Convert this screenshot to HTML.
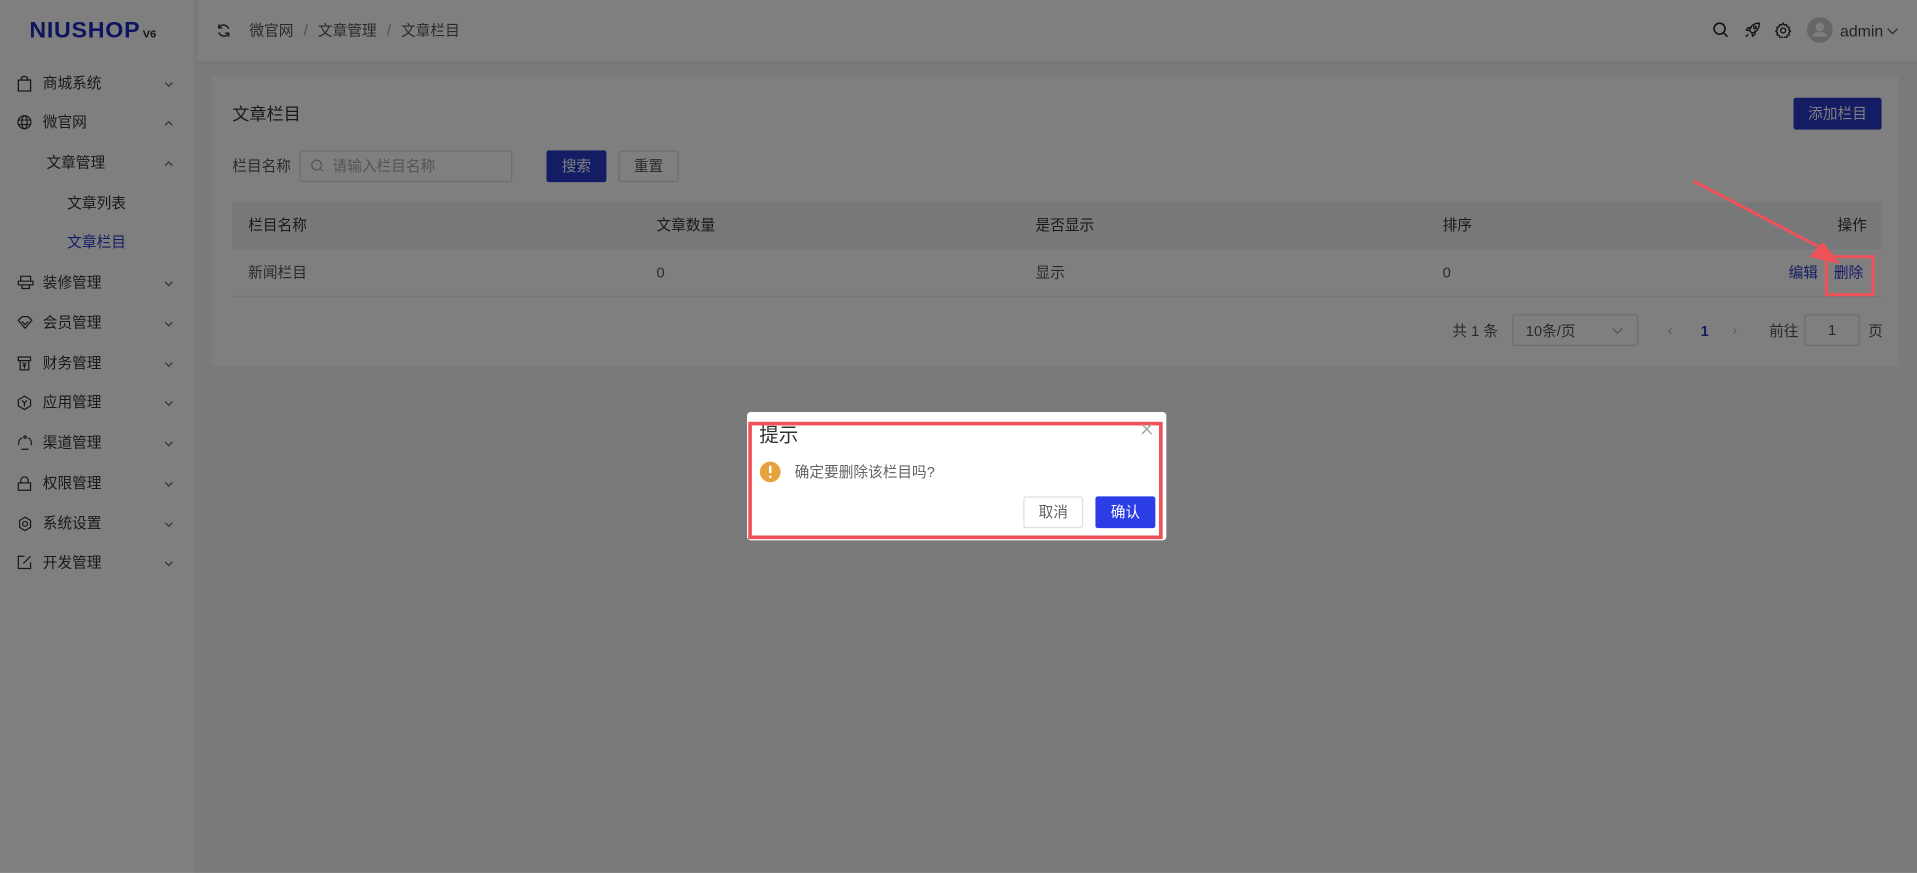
<!DOCTYPE html>
<html><head><meta charset="utf-8"><style>
*{margin:0;padding:0;box-sizing:border-box}
html,body{width:1917px;height:873px;overflow:hidden;background:#f4f5f7}
body{font-family:"Liberation Sans","Noto Sans CJK SC",sans-serif;color:#333;font-size:12px}
#w{position:absolute;left:0;top:0;width:1568px;height:714px;transform:scale(1.22258);transform-origin:0 0;background:#f4f5f7}
.a{position:absolute;white-space:nowrap;line-height:1}
.side{position:absolute;left:0;top:0;width:160px;height:714px;background:#fff;border-right:1px solid #eee}
.mi{position:absolute;left:0;width:160px;height:20px;font-size:12px;color:#333;line-height:20px}
.mi .t{position:absolute;left:35px}
.mi svg.ic{position:absolute;left:14px;top:4px}
.mi .ch{position:absolute;left:134px;top:8px}
.hdr{position:absolute;left:161px;top:0;right:0;height:50px;background:#fff;box-shadow:0 1px 3px rgba(0,0,0,.05)}
.card{position:absolute;left:173px;top:63px;width:1380px;height:236px;background:#fff}
.btnp{position:absolute;background:#2838c8;color:#fff;text-align:center;border-radius:2px}
.ov{position:absolute;left:0;top:0;width:1568px;height:714px;background:rgba(0,0,0,.5)}
</style></head><body><div id="w">
<div class="side">
 <div class="a" style="left:24px;top:16px;font-size:19px;font-weight:bold;color:#1d2bc0;letter-spacing:0.6px;transform:scaleY(0.95)">NIUSHOP<span style="font-size:9px;color:#222;margin-left:2px;letter-spacing:0">V6</span></div>
 <div class="mi" style="top:58px"><svg class="ic" width="12" height="13" viewBox="0 0 12 13" fill="none" stroke="#333" stroke-width="1.1"><rect x="1" y="3.5" width="10" height="9"/><path d="M3.5 3.5V2a2.5 1.5 0 0 1 5 0v1.5"/></svg><span class="t">商城系统</span><svg class="ch" width="8" height="6" viewBox="0 0 8 6"><path d="M1 1.5l3 3 3-3" stroke="#666" fill="none"/></svg></div>
 <div class="mi" style="top:90px"><svg class="ic" width="12" height="12" viewBox="0 0 12 12" fill="none" stroke="#333" stroke-width="1"><circle cx="6" cy="6" r="5.3"/><ellipse cx="6" cy="6" rx="2.2" ry="5.3"/><path d="M1 4.2h10M1 7.8h10"/></svg><span class="t">微官网</span><svg class="ch" width="8" height="6" viewBox="0 0 8 6"><path d="M1 4.5l3-3 3 3" stroke="#666" fill="none"/></svg></div>
 <div class="mi" style="top:123px"><span class="t" style="left:38px">文章管理</span><svg class="ch" width="8" height="6" viewBox="0 0 8 6"><path d="M1 4.5l3-3 3 3" stroke="#666" fill="none"/></svg></div>
 <div class="mi" style="top:156px"><span class="t" style="left:55px">文章列表</span></div>
 <div class="mi" style="top:188px"><span class="t" style="left:55px;color:#2838c8">文章栏目</span></div>
 <div class="mi" style="top:221px"><svg class="ic" width="14" height="12" viewBox="0 0 14 12" fill="none" stroke="#333"><path d="M3 1h8v4H3zM1 5h12v3H1zM4 8v3h6V8"/></svg><span class="t">装修管理</span><svg class="ch" width="8" height="6" viewBox="0 0 8 6"><path d="M1 1.5l3 3 3-3" stroke="#666" fill="none"/></svg></div>
 <div class="mi" style="top:254px"><svg class="ic" width="13" height="12" viewBox="0 0 13 12" fill="none" stroke="#333"><path d="M1 4l3-3h5l3 3-5.5 6.5z M4 5l2.5 2.5L9 5"/></svg><span class="t">会员管理</span><svg class="ch" width="8" height="6" viewBox="0 0 8 6"><path d="M1 1.5l3 3 3-3" stroke="#666" fill="none"/></svg></div>
 <div class="mi" style="top:287px"><svg class="ic" width="12" height="12" viewBox="0 0 12 12" fill="none" stroke="#333"><path d="M1 1h10v3H1zM2.5 4v7.5h7V4M4.5 5.5L6 7l1.5-1.5M6 7v3.5M4.5 8h3"/></svg><span class="t">财务管理</span><svg class="ch" width="8" height="6" viewBox="0 0 8 6"><path d="M1 1.5l3 3 3-3" stroke="#666" fill="none"/></svg></div>
 <div class="mi" style="top:319px"><svg class="ic" width="12" height="13" viewBox="0 0 12 13" fill="none" stroke="#333"><path d="M6 1l5 3v5l-5 3-5-3V4z M4 4.5l2 2 2-2M6 6.5v3"/></svg><span class="t">应用管理</span><svg class="ch" width="8" height="6" viewBox="0 0 8 6"><path d="M1 1.5l3 3 3-3" stroke="#666" fill="none"/></svg></div>
 <div class="mi" style="top:352px"><svg class="ic" width="13" height="13" viewBox="0 0 13 13" fill="none" stroke="#333"><path d="M4 2A5 5 0 0 0 1.5 8M9 2a5 5 0 0 1 2.5 6M3.5 11.5h6"/><circle cx="6.5" cy="1.5" r="1"/></svg><span class="t">渠道管理</span><svg class="ch" width="8" height="6" viewBox="0 0 8 6"><path d="M1 1.5l3 3 3-3" stroke="#666" fill="none"/></svg></div>
 <div class="mi" style="top:385px"><svg class="ic" width="12" height="13" viewBox="0 0 12 13" fill="none" stroke="#333"><rect x="1" y="6" width="10" height="6"/><path d="M3 6V4a3 3 0 0 1 6 0v2"/></svg><span class="t">权限管理</span><svg class="ch" width="8" height="6" viewBox="0 0 8 6"><path d="M1 1.5l3 3 3-3" stroke="#666" fill="none"/></svg></div>
 <div class="mi" style="top:418px"><svg class="ic" width="13" height="13" viewBox="0 0 13 13" fill="none" stroke="#333"><path d="M6.5 1l4.5 2.7v5.6L6.5 12 2 9.3V3.7z"/><circle cx="6.5" cy="6.5" r="2"/></svg><span class="t">系统设置</span><svg class="ch" width="8" height="6" viewBox="0 0 8 6"><path d="M1 1.5l3 3 3-3" stroke="#666" fill="none"/></svg></div>
 <div class="mi" style="top:450px"><svg class="ic" width="12" height="12" viewBox="0 0 12 12" fill="none" stroke="#333"><path d="M6 1H1v10h10V6M5 7l6-6"/></svg><span class="t">开发管理</span><svg class="ch" width="8" height="6" viewBox="0 0 8 6"><path d="M1 1.5l3 3 3-3" stroke="#666" fill="none"/></svg></div>
</div>
<div class="hdr">
 <svg class="a" style="left:16px;top:19px" width="12" height="12" viewBox="0 0 12 12" fill="none" stroke="#333" stroke-width="1.2"><path d="M10 4.5A4.5 4.5 0 0 0 2 3.5M2 7.5a4.5 4.5 0 0 0 8 1"/><path d="M2 1v2.8h2.8M10 11V8.2H7.2"/></svg>
 <div class="a" style="left:43px;top:19px;font-size:12px;color:#555">微官网 <span style="color:#999;margin:0 5px">/</span> 文章管理 <span style="color:#999;margin:0 5px">/</span> 文章栏目</div>
 <svg class="a" style="left:1240px;top:18px" width="13" height="13" viewBox="0 0 13 13" fill="none" stroke="#222" stroke-width="1.3"><circle cx="5.5" cy="5.5" r="4.5"/><path d="M9 9l3 3"/></svg>
 <svg class="a" style="left:1266px;top:18px" width="13" height="13" viewBox="0 0 13 13" fill="none" stroke="#222" stroke-width="1.1"><path d="M12 1C8 1 5 3 4 7l2 2c4-1 6-4 6-8zM4 7L1.5 6.5 3 4.5h3M6 9l.5 2.5 2-1.5V7M3 10l-2 2"/><circle cx="8.5" cy="4.5" r="1"/></svg>
 <svg class="a" style="left:1291px;top:18px" width="13" height="13" viewBox="0 0 13 13" fill="none" stroke="#222" stroke-width="1.1"><path d="M6.5 1l1 1.5 1.8-.3.5 1.7 1.7.6-.3 1.8 1.3 1.2-1.3 1.2.3 1.8-1.7.6-.5 1.7-1.8-.3-1 1.5-1-1.5-1.8.3-.5-1.7-1.7-.6.3-1.8L.5 7.5l1.3-1.2-.3-1.8 1.7-.6.5-1.7 1.8.3z"/><circle cx="6.5" cy="6.9" r="2"/></svg>
 <svg class="a" style="left:1317px;top:14px" width="21" height="21" viewBox="0 0 21 21"><circle cx="10.5" cy="10.5" r="10.5" fill="#ccc"/><circle cx="10.5" cy="8" r="3.5" fill="#fff"/><path d="M4 16c1.5-3 4-4 6.5-4s5 1 6.5 4z" fill="#fff"/></svg>
 <div class="a" style="left:1344px;top:19px;font-size:13px;color:#444">admin</div>
 <svg class="a" style="left:1382px;top:22px" width="10" height="7" viewBox="0 0 10 7"><path d="M1 1.5l4 4 4-4" stroke="#555" fill="none"/></svg>
</div>
<div class="card">
 <div class="a" style="left:17px;top:23px;font-size:14px;color:#333">文章栏目</div>
 <div class="btnp" style="left:1294px;top:17px;width:72px;height:26px;line-height:26px;font-size:12px">添加栏目</div>
 <div class="a" style="left:17px;top:67px;font-size:12px;color:#555">栏目名称</div>
 <div class="a" style="left:72px;top:60px;width:174px;height:26px;border:1px solid #ddd;border-radius:2px"></div>
 <svg class="a" style="left:81px;top:67px" width="11" height="11" viewBox="0 0 11 11" fill="none" stroke="#aaa"><circle cx="5" cy="5" r="4"/><path d="M8 8l2 2"/></svg>
 <div class="a" style="left:99px;top:67px;font-size:12px;color:#aaa">请输入栏目名称</div>
 <div class="btnp" style="left:274px;top:60px;width:49px;height:26px;line-height:26px">搜索</div>
 <div class="a" style="left:333px;top:60px;width:49px;height:26px;line-height:24px;border:1px solid #ddd;text-align:center;color:#555;border-radius:2px">重置</div>
 <div class="a" style="left:17px;top:102px;width:1349px;height:39px;background:#eef0f5"></div>
 <div class="a" style="left:30px;top:115px">栏目名称</div>
 <div class="a" style="left:364px;top:115px">文章数量</div>
 <div class="a" style="left:674px;top:115px">是否显示</div>
 <div class="a" style="left:1007px;top:115px">排序</div>
 <div class="a" style="left:1330px;top:115px">操作</div>
 <div class="a" style="left:17px;top:179px;width:1349px;height:1px;background:#eee"></div>
 <div class="a" style="left:30px;top:154px;color:#555">新闻栏目</div>
 <div class="a" style="left:364px;top:154px;color:#555">0</div>
 <div class="a" style="left:674px;top:154px;color:#555">显示</div>
 <div class="a" style="left:1007px;top:154px;color:#555">0</div>
 <div class="a" style="left:1290px;top:154px;color:#2838c8">编辑</div>
 <div class="a" style="left:1327px;top:154px;color:#2838c8">删除</div>
 <div class="a" style="left:1015px;top:202px;color:#555">共 1 条</div>
 <div class="a" style="left:1064px;top:194px;width:103px;height:26px;border:1px solid #ddd;border-radius:2px"></div>
 <div class="a" style="left:1075px;top:202px;color:#555">10条/页</div>
 <svg class="a" style="left:1145px;top:204px" width="10" height="7" viewBox="0 0 10 7"><path d="M1 1.5l4 4 4-4" stroke="#aaa" fill="none"/></svg>
 <div class="a" style="left:1191px;top:201px;color:#bbb">&lsaquo;</div>
 <div class="a" style="left:1218px;top:202px;color:#2838c8;font-weight:bold">1</div>
 <div class="a" style="left:1244px;top:201px;color:#bbb">&rsaquo;</div>
 <div class="a" style="left:1274px;top:202px;color:#555">前往</div>
 <div class="a" style="left:1303px;top:194px;width:45px;height:26px;border:1px solid #ddd;text-align:center;line-height:24px;color:#555;border-radius:2px">1</div>
 <div class="a" style="left:1355px;top:202px;color:#555">页</div>
</div>
<div class="ov"></div>
<svg class="a" style="left:0;top:0" width="1568" height="714"><path d="M1385 148L1490 203" stroke="#f0525a" stroke-width="2.5"/><path d="M1505 216L1480 210 1491 198z" fill="#f0525a"/><rect x="1494" y="210" width="38" height="31" fill="none" stroke="#f0525a" stroke-width="2.5"/></svg>
<div class="a" style="left:611px;top:337px;width:343px;height:105px;background:#fff;border-radius:3px"></div>
<div class="a" style="left:612px;top:345px;width:339px;height:96px;border:3px solid #f0525a"></div>
<div class="a" style="left:621px;top:349px;font-size:16px;color:#303133">提示</div>
<svg class="a" style="left:933px;top:346px" width="10" height="10" viewBox="0 0 10 10"><path d="M1 1l8 8M9 1l-8 8" stroke="#999" stroke-width="1"/></svg>
<svg class="a" style="left:621px;top:377px" width="18" height="18" viewBox="0 0 18 18"><circle cx="9" cy="9" r="8.5" fill="#e6a23c"/><path d="M9 4v6" stroke="#fff" stroke-width="2"/><circle cx="9" cy="13" r="1.1" fill="#fff"/></svg>
<div class="a" style="left:650px;top:380px;font-size:12px;color:#606266">确定要删除该栏目吗?</div>
<div class="a" style="left:837px;top:406px;width:49px;height:26px;border:1px solid #dcdfe6;border-radius:2px;text-align:center;line-height:24px;color:#606266">取消</div>
<div class="a" style="left:896px;top:406px;width:49px;height:26px;background:#2b3de6;border-radius:2px;text-align:center;line-height:26px;color:#fff">确认</div>
</div></body></html>
